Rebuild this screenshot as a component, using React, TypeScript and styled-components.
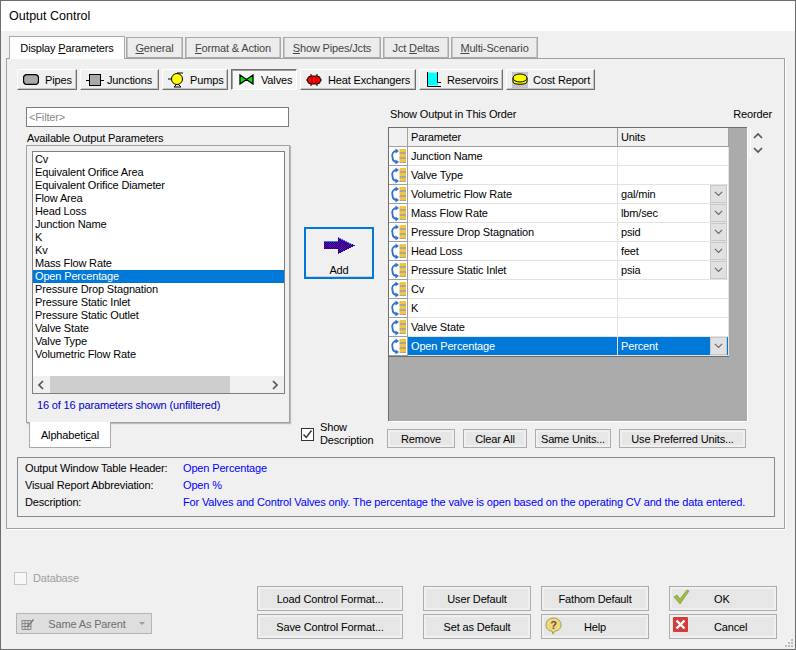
import React from "react";
import styled, { createGlobalStyle } from "styled-components";

const GlobalStyle = createGlobalStyle`
  html, body {
    margin: 0;
    padding: 0;
    background: #f0f0f0;
  }
  * {
    box-sizing: border-box;
  }
  body {
    font-family: "Liberation Sans", Arial, sans-serif;
    font-size: 11px;
    letter-spacing: -0.15px;
    color: #000;
  }
  u {
    text-underline-offset: 1px;
  }
`;

const Dialog = styled.div`
  position: relative;
  width: 796px;
  height: 650px;
  display: flex;
  flex-direction: column;
  background: #f0f0f0;
  border: 1px solid #6d6d6d;
  overflow: hidden;
`;

const TitleBar = styled.div`
  height: 30px;
  flex: none;
  background: #fff;
  padding-left: 8px;
  display: flex;
  align-items: center;
  font-size: 12.5px;
  letter-spacing: 0;
`;

const TabStrip = styled.div`
  display: flex;
  align-items: flex-end;
  height: 27px;
  padding-left: 8px;
  gap: 2px;
`;

const Tab = styled.div<{ $active?: boolean; $width: number }>`
  width: ${(p) => p.$width}px;
  height: ${(p) => (p.$active ? 23 : 21)}px;
  margin-bottom: ${(p) => (p.$active ? -1 : 0)}px;
  margin-right: ${(p) => (p.$active ? -1 : 0)}px;
  position: relative;
  z-index: ${(p) => (p.$active ? 2 : 1)};
  display: flex;
  align-items: center;
  justify-content: center;
  white-space: nowrap;
  background: ${(p) => (p.$active ? "#fff" : "#ececec")};
  border: 1px solid #a9a9a9;
  border-bottom: ${(p) => (p.$active ? "none" : "1px solid #a9a9a9")};
  box-shadow: ${(p) => (p.$active ? "none" : "inset 1px 0 0 #c8c8c8, inset -1px 0 0 #c8c8c8")};
  color: ${(p) => (p.$active ? "#000" : "#444")};
`;

const TabPanel = styled.div`
  width: 779px;
  height: 471px;
  margin-left: 5px;
  background: #f0f0f0;
  border: 1px solid #a0a0a0;
  padding: 10px 0 0 10px;
  position: relative;
  box-shadow: 1px 1px 0 #fff;
`;

const Toolbar = styled.div`
  display: flex;
  gap: 3px;
`;

const ToolButton = styled.div<{ $width: number; $active?: boolean; $pad: number; $gap: number }>`
  width: ${(p) => p.$width}px;
  height: 21px;
  display: flex;
  align-items: center;
  gap: ${(p) => p.$gap}px;
  padding-left: ${(p) => p.$pad}px;
  white-space: nowrap;
  background: ${(p) => (p.$active ? "#f7f7f7" : "#f0f0f0")};
  border: 1px solid;
  border-color: ${(p) =>
    p.$active
      ? "#6f6f6f #fff #fff #6f6f6f"
      : "#fff #6f6f6f #6f6f6f #fff"};
  box-shadow: ${(p) =>
    p.$active
      ? "inset 1px 1px 0 #a0a0a0"
      : "inset -1px -1px 0 #c4c4c4"};

  & > svg {
    flex: none;
  }
`;

const Columns = styled.div`
  display: flex;
  margin: 17px 0 0 9px;
  height: 341px;
`;

const LeftColumn = styled.div`
  width: 264px;
  flex: none;
  display: flex;
  flex-direction: column;
`;

const FilterInput = styled.div`
  width: 263px;
  height: 20px;
  background: #fff;
  border: 1px solid #7a7a7a;
  color: #8a8a8a;
  padding-left: 2px;
  display: flex;
  align-items: center;
`;

const GroupLabel = styled.div`
  margin: 4px 0 0 1px;
  height: 14px;
  line-height: 14px;
`;

const ListGroup = styled.div`
  height: 278px;
  border: 1px solid #a0a0a0;
  box-shadow: 1px 1px 1px #bdbdbd;
  padding: 5px 4px 0 5px;
  display: flex;
  flex-direction: column;
`;

const ListBox = styled.div`
  height: 243px;
  border: 1px solid #7f7f7f;
  background: #fff;
  padding-top: 1px;
  display: flex;
  flex-direction: column;
  justify-content: space-between;
`;

const ListRows = styled.div`
  display: flex;
  flex-direction: column;
`;

const ListRow = styled.div<{ $selected?: boolean }>`
  height: 13px;
  line-height: 13px;
  padding-left: 2px;
  background: ${(p) => (p.$selected ? "#0078d7" : "transparent")};
  color: ${(p) => (p.$selected ? "#fff" : "#000")};
  white-space: nowrap;
`;

const ScrollBar = styled.div`
  height: 17px;
  display: flex;
  align-items: center;
  background: #f0f0f0;
  flex: none;
`;

const ScrollArrow = styled.div`
  width: 17px;
  height: 17px;
  display: flex;
  align-items: center;
  justify-content: center;
  flex: none;
`;

const ScrollTrack = styled.div`
  flex: 1;
  height: 17px;
`;

const ScrollThumb = styled.div`
  width: 180px;
  height: 17px;
  background: #cdcdcd;
`;

const ShownCount = styled.div`
  color: #0000c8;
  margin: 4px 0 0 5px;
  line-height: 14px;
`;

const SideTab = styled.div`
  position: relative;
  width: 82px;
  height: 26px;
  margin: -1px 0 0 3px;
  background: #fff;
  border: 1px solid #a9a9a9;
  border-top: none;
  display: flex;
  align-items: center;
  justify-content: center;
`;

const MiddleColumn = styled.div`
  width: 98px;
  flex: none;
  display: flex;
  flex-direction: column;
  padding-top: 120px;
`;

const AddButton = styled.div`
  width: 70px;
  height: 52px;
  margin-left: 14px;
  border: 2px solid #0078d7;
  background: #f0f0f0;
  display: flex;
  flex-direction: column;
  align-items: center;
  padding-top: 8px;
  gap: 9px;
  line-height: 14px;
  box-shadow: inset 0 -1px 0 #d0d0d0;
`;

const ShowDescription = styled.div`
  margin: auto 0 0 11px;
  display: flex;
  gap: 6px;
  line-height: 13px;
  height: 27px;
`;

const CheckBox = styled.div<{ $disabled?: boolean }>`
  width: 13px;
  height: 13px;
  flex: none;
  background: ${(p) => (p.$disabled ? "#f7f7f7" : "#fff")};
  border: 1px solid ${(p) => (p.$disabled ? "#c6c6c6" : "#333")};
  display: flex;
  align-items: center;
  justify-content: center;
  margin-top: 7px;
`;

const DatabaseCheck = styled(CheckBox)`
  margin-top: 1px;
`;

const RightColumn = styled.div`
  width: 390px;
  flex: none;
  display: flex;
  flex-direction: column;
`;

const RightHeading = styled.div`
  height: 20px;
  display: flex;
  justify-content: space-between;
  padding: 0 6px 0 2px;
  line-height: 14px;
`;

const GridRow = styled.div`
  display: flex;
`;

const GridArea = styled.div`
  width: 359px;
  height: 294px;
  background: #ababab;
  border-top: 1px solid #6d6d6d;
  border-left: 1px solid #6d6d6d;
  box-shadow: 1px 1px 0 #fff;
  flex: none;
`;

const GridTable = styled.div`
  width: 340px;
  display: grid;
  grid-template-columns: 19px 210px 111px;
  grid-auto-rows: 19px;
  background: #fff;
  border-bottom: 1px solid #6d6d6d;
  border-right: 1px solid #6d6d6d;
`;

const HeaderCell = styled.div`
  background: #f0f0f0;
  border-right: 1px solid #a0a0a0;
  border-bottom: 1px solid #a0a0a0;
  padding: 0 0 1px 3px;
  display: flex;
  align-items: center;
`;

const HandleCell = styled.div`
  background: #fff;
  border-right: 1px solid #a0a0a0;
  border-bottom: 1px solid #a0a0a0;
  display: flex;
  align-items: center;
  justify-content: center;
`;

const DataCell = styled.div<{ $selected?: boolean }>`
  position: relative;
  padding: 0 0 1px 3px;
  display: flex;
  align-items: center;
  background: ${(p) => (p.$selected ? "#0078d7" : "#fff")};
  color: ${(p) => (p.$selected ? "#fff" : "#000")};
  border-right: 1px solid #e3e3e3;
  border-bottom: 1px solid #e3e3e3;
`;

const CellDrop = styled.div`
  position: absolute;
  right: 1px;
  top: 0;
  width: 17px;
  height: 18px;
  background: #e1e1e1;
  border: 1px solid #c8c8c8;
  display: flex;
  align-items: center;
  justify-content: center;
`;

const ReorderArrows = styled.div`
  margin: 1px 0 0 3px;
  padding-top: 4px;
  height: 30px;
  width: 15px;
  border-left: 1px solid #fff;
  display: flex;
  flex-direction: column;
  align-items: center;
  gap: 4px;
`;

const ActionRow = styled.div`
  display: flex;
  margin-top: 8px;
  margin-left: -1px;
`;

const FlatButton = styled.div<{ $width: number; $gap?: number; $height?: number }>`
  position: relative;
  width: ${(p) => p.$width}px;
  height: ${(p) => p.$height ?? 19}px;
  margin-right: ${(p) => p.$gap ?? 0}px;
  flex: none;
  display: flex;
  align-items: center;
  justify-content: center;
  white-space: nowrap;
  background: #e6e6e6;
  border: 1px solid #adadad;
  box-shadow: inset 0 0 0 2px #f0f0f0;
`;

const ChoiceButton = styled(FlatButton)`
  justify-content: flex-start;
  padding-left: 44px;
`;

const DescriptionBox = styled.div`
  width: 758px;
  height: 60px;
  margin-top: 9px;
  border: 1px solid #7f8c96;
  padding: 1px 7px;
  display: grid;
  grid-template-columns: 158px 1fr;
  grid-auto-rows: 17px;
  align-items: center;
  white-space: nowrap;
`;

const BlueValue = styled.div`
  color: #0000ff;
  white-space: nowrap;
`;

const BottomArea = styled.div`
  flex: 1;
  display: flex;
  position: relative;
`;

const BottomLeft = styled.div`
  width: 256px;
  flex: none;
  display: flex;
  flex-direction: column;
  padding: 42px 0 0 13px;
`;

const DatabaseRow = styled.div`
  display: flex;
  gap: 6px;
  color: #a0a0a0;
  line-height: 15px;
`;

const ParentSelect = styled.div`
  width: 136px;
  height: 21px;
  margin: 27px 0 0 2px;
  background: #dedede;
  border: 1px solid #b4b4b4;
  color: #6f6f6f;
  display: flex;
  align-items: center;
  padding: 0 6px 0 4px;
`;

const SelectText = styled.span`
  flex: 1;
  text-align: center;
`;

const SelectCaret = styled.span`
  width: 0;
  height: 0;
  border-left: 3px solid transparent;
  border-right: 3px solid transparent;
  border-top: 3px solid #9a9a9a;
`;

const ButtonColumn = styled.div<{ $gap: number }>`
  display: flex;
  flex-direction: column;
  gap: 3px;
  padding-top: 57px;
  margin-right: ${(p) => p.$gap}px;
`;

const ButtonIcon = styled.span`
  position: absolute;
  left: 3px;
  top: 2px;
  display: flex;
`;

const Grip = styled.svg`
  position: absolute;
  right: 1px;
  bottom: 1px;
`;

type ChevronProps = {
  dir: "up" | "down" | "left" | "right";
  color?: string;
  size?: number;
  weight?: number;
};

const Chevron = ({ dir, color = "#555", size = 10, weight = 1.7 }: ChevronProps) => {
  const d = {
    up: "M1 6 L5 2 L9 6",
    down: "M1 2 L5 6 L9 2",
    left: "M6 1 L2 5 L6 9",
    right: "M2 1 L6 5 L2 9",
  }[dir];
  return (
    <svg width={size} height={size} viewBox="0 0 10 10">
      <path d={d} fill="none" stroke={color} strokeWidth={weight} />
    </svg>
  );
};

const PipeIcon = () => (
  <svg width="16" height="11" viewBox="0 0 16 11">
    <rect x="0.5" y="0.5" width="15" height="10" rx="3.5" fill="#a9a9a9" stroke="#000" strokeWidth="1.3" />
  </svg>
);

const JunctionIcon = () => (
  <svg width="18" height="12" viewBox="0 0 18 12">
    <path d="M0 6.5 H4 M14 6.5 H18" stroke="#000" />
    <rect x="3.5" y="0.5" width="11" height="11" fill="#a9a9a9" stroke="#000" />
  </svg>
);

const PumpIcon = () => (
  <svg width="18" height="16" viewBox="0 0 18 16">
    <path d="M9 1 H15" stroke="#000" />
    <circle cx="9" cy="7" r="5.5" fill="#ffff00" stroke="#000" />
    <path d="M0 7 H3.5 M9 12 L6 15 H13 L10 12" fill="none" stroke="#000" />
  </svg>
);

const ValveIcon = () => (
  <svg width="15" height="11" viewBox="0 0 15 11">
    <path d="M1 1 L7.5 5.5 L1 10 Z M14 1 L7.5 5.5 L14 10 Z" fill="#00ee00" stroke="#000" strokeWidth="1.3" />
  </svg>
);

const HeatIcon = () => (
  <svg width="16" height="12" viewBox="0 0 16 12">
    <path d="M0 6 H2 M14 6 H16 M5 0 V2 M11 0 V2 M5 10 V12 M11 10 V12" stroke="#000" />
    <rect x="1.5" y="2" width="13" height="8" rx="3.5" fill="#ff0000" stroke="#000" />
    <path d="M6 2 V10 M10 2 V10" stroke="#900" />
  </svg>
);

const ReservoirIcon = () => (
  <svg width="15" height="15" viewBox="0 0 15 15">
    <rect x="1" y="0.5" width="10" height="13" fill="#00ffff" />
    <path d="M0.5 0 V14.5 H14 M10.5 0 V10.5 H14" fill="none" stroke="#000" />
  </svg>
);

const CostIcon = () => (
  <svg width="16" height="16" viewBox="0 0 16 16">
    <rect width="16" height="16" fill="#c4c4c4" />
    <path d="M1 6 V10 C1 13 15 13 15 10 V6" fill="#ffff00" stroke="#000" />
    <ellipse cx="8" cy="6" rx="7" ry="4" fill="#ffff00" stroke="#000" />
  </svg>
);

const HandleIcon = () => (
  <svg width="17" height="17" viewBox="0 0 17 17">
    <path d="M7 3 C3 3 1.5 6 2.5 9" fill="none" stroke="#2f6fd0" strokeWidth="1.8" />
    <path d="M5.5 0.5 L9 3 L5.5 5.5 Z" fill="#2f6fd0" />
    <path d="M2.5 9 C2.5 12.5 4.5 14 7 14" fill="none" stroke="#2f6fd0" strokeWidth="1.8" />
    <path d="M5.5 11.5 L9 14 L5.5 16.5 Z" fill="#2f6fd0" />
    <rect x="9.5" y="1" width="6.5" height="3" fill="#f5c63c" />
    <rect x="9.5" y="4" width="6.5" height="2" fill="#a8a8a0" />
    <rect x="9.5" y="6" width="6.5" height="3" fill="#f5c63c" />
    <rect x="9.5" y="9" width="6.5" height="2" fill="#a8a8a0" />
    <rect x="9.5" y="11" width="6.5" height="3" fill="#f5c63c" />
    <rect x="9.5" y="14" width="6.5" height="1" fill="#a8a8a0" />
  </svg>
);

const AddArrow = () => (
  <svg width="31" height="17" viewBox="0 0 31 17" shapeRendering="crispEdges">
    <defs>
      <pattern id="dither" width="2" height="2" patternUnits="userSpaceOnUse">
        <rect width="2" height="2" fill="#0000a8" />
        <rect width="1" height="1" fill="#800080" />
        <rect x="1" y="1" width="1" height="1" fill="#800080" />
      </pattern>
    </defs>
    <path d="M0 5 H14 V0 L31 8.5 L14 17 V12 H0 Z" fill="url(#dither)" />
    <path d="M0 4.5 H14 M14 0.5 L28 7.5" stroke="#3a7be0" fill="none" />
  </svg>
);

const CheckMark = () => (
  <svg width="11" height="11" viewBox="0 0 11 11">
    <path d="M1.5 5.5 L4.2 8.5 L9.5 1.5" fill="none" stroke="#333" strokeWidth="1.4" />
  </svg>
);

const OkIcon = () => (
  <svg width="17" height="16" viewBox="0 0 17 16">
    <path d="M1 8 L4 6 L7 10 L14 1 L16 2 L7 15 Z" fill="#9cbe3c" stroke="#6f8f24" strokeWidth="0.6" />
  </svg>
);

const HelpIcon = () => (
  <svg width="17" height="18" viewBox="0 0 17 18">
    <path d="M8.5 1 C13 1 16 4 16 8 C16 12 13 14 10 14 L8 17 L7 14 C3 14 1 11 1 8 C1 4 4 1 8.5 1 Z" fill="#f0d878" stroke="#a89858" />
    <text x="8.5" y="12" fontSize="11" fontWeight="700" textAnchor="middle" fill="#555" fontFamily="Liberation Sans, sans-serif">?</text>
  </svg>
);

const CancelIcon = () => (
  <svg width="15" height="15" viewBox="0 0 15 15">
    <rect width="15" height="15" rx="1" fill="#d63a3a" />
    <path d="M3.5 3.5 L11.5 11.5 M11.5 3.5 L3.5 11.5" stroke="#fff" strokeWidth="2.4" />
  </svg>
);

const SheetIcon = () => (
  <svg width="14" height="14" viewBox="0 0 14 14">
    <path d="M1 3.5 H10 V12.5 H1 Z M1 6.5 H10 M1 9.5 H10 M4 3.5 V12.5 M7 3.5 V12.5" fill="#d8d8d8" stroke="#8a8a8a" />
    <path d="M6 9 L12 2 L13 3 L7 10 Z" fill="#777" />
  </svg>
);

const tools = [
  { label: "Pipes", width: 60, pad: 5, gap: 6, icon: <PipeIcon /> },
  { label: "Junctions", width: 79, pad: 5, gap: 3, icon: <JunctionIcon /> },
  { label: "Pumps", width: 66, pad: 5, gap: 4, icon: <PumpIcon /> },
  { label: "Valves", width: 66, pad: 7, gap: 7, icon: <ValveIcon />, active: true },
  { label: "Heat Exchangers", width: 116, pad: 5, gap: 6, icon: <HeatIcon /> },
  { label: "Reservoirs", width: 84, pad: 7, gap: 5, icon: <ReservoirIcon /> },
  { label: "Cost Report", width: 89, pad: 5, gap: 5, icon: <CostIcon /> },
];

const available = [
  "Cv",
  "Equivalent Orifice Area",
  "Equivalent Orifice Diameter",
  "Flow Area",
  "Head Loss",
  "Junction Name",
  "K",
  "Kv",
  "Mass Flow Rate",
  "Open Percentage",
  "Pressure Drop Stagnation",
  "Pressure Static Inlet",
  "Pressure Static Outlet",
  "Valve State",
  "Valve Type",
  "Volumetric Flow Rate",
];

const outputRows = [
  { name: "Junction Name", units: "" },
  { name: "Valve Type", units: "" },
  { name: "Volumetric Flow Rate", units: "gal/min" },
  { name: "Mass Flow Rate", units: "lbm/sec" },
  { name: "Pressure Drop Stagnation", units: "psid" },
  { name: "Head Loss", units: "feet" },
  { name: "Pressure Static Inlet", units: "psia" },
  { name: "Cv", units: "" },
  { name: "K", units: "" },
  { name: "Valve State", units: "" },
  { name: "Open Percentage", units: "Percent", selected: true },
];

export default function App() {
  return (
    <>
      <GlobalStyle />
      <Dialog>
        <TitleBar>Output Control</TitleBar>
        <TabStrip>
          <Tab $active $width={116}>
            <span>
              Display <u>P</u>arameters
            </span>
          </Tab>
          <Tab $width={57}>
            <span>
              <u>G</u>eneral
            </span>
          </Tab>
          <Tab $width={96}>
            <span>
              <u>F</u>ormat &amp; Action
            </span>
          </Tab>
          <Tab $width={98}>
            <span>
              <u>S</u>how Pipes/Jcts
            </span>
          </Tab>
          <Tab $width={66}>
            <span>
              Jct <u>D</u>eltas
            </span>
          </Tab>
          <Tab $width={87}>
            <span>
              <u>M</u>ulti-Scenario
            </span>
          </Tab>
        </TabStrip>
        <TabPanel>
          <Toolbar>
            {tools.map((t) => (
              <ToolButton key={t.label} $width={t.width} $active={t.active} $pad={t.pad} $gap={t.gap}>
                {t.icon}
                <span>{t.label}</span>
              </ToolButton>
            ))}
          </Toolbar>
          <Columns>
            <LeftColumn>
              <FilterInput>&lt;Filter&gt;</FilterInput>
              <GroupLabel>Available Output Parameters</GroupLabel>
              <ListGroup>
                <ListBox>
                  <ListRows>
                    {available.map((name) => (
                      <ListRow key={name} $selected={name === "Open Percentage"}>
                        {name}
                      </ListRow>
                    ))}
                  </ListRows>
                  <ScrollBar>
                    <ScrollArrow>
                      <Chevron dir="left" />
                    </ScrollArrow>
                    <ScrollTrack>
                      <ScrollThumb />
                    </ScrollTrack>
                    <ScrollArrow>
                      <Chevron dir="right" />
                    </ScrollArrow>
                  </ScrollBar>
                </ListBox>
                <ShownCount>16 of 16 parameters shown (unfiltered)</ShownCount>
              </ListGroup>
              <SideTab>
                <span>
                  Alphabeti<u>c</u>al
                </span>
              </SideTab>
            </LeftColumn>
            <MiddleColumn>
              <AddButton>
                <AddArrow />
                <span>Add</span>
              </AddButton>
              <ShowDescription>
                <CheckBox>
                  <CheckMark />
                </CheckBox>
                <span>
                  Show
                  <br />
                  Description
                </span>
              </ShowDescription>
            </MiddleColumn>
            <RightColumn>
              <RightHeading>
                <span>Show Output in This Order</span>
                <span>Reorder</span>
              </RightHeading>
              <GridRow>
                <GridArea>
                  <GridTable>
                    <HeaderCell />
                    <HeaderCell>Parameter</HeaderCell>
                    <HeaderCell>Units</HeaderCell>
                    {outputRows.map((row) => (
                      <React.Fragment key={row.name}>
                        <HandleCell>
                          <HandleIcon />
                        </HandleCell>
                        <DataCell $selected={row.selected}>{row.name}</DataCell>
                        <DataCell $selected={row.selected}>
                          {row.units}
                          {row.units && (
                            <CellDrop>
                              <Chevron dir="down" color="#666" size={9} weight={1.2} />
                            </CellDrop>
                          )}
                        </DataCell>
                      </React.Fragment>
                    ))}
                  </GridTable>
                </GridArea>
                <ReorderArrows>
                  <Chevron dir="up" />
                  <Chevron dir="down" />
                </ReorderArrows>
              </GridRow>
              <ActionRow>
                <FlatButton $width={68} $gap={8}>Remove</FlatButton>
                <FlatButton $width={64} $gap={8}>Clear All</FlatButton>
                <FlatButton $width={76} $gap={8}>Same Units...</FlatButton>
                <FlatButton $width={127}>Use Preferred Units...</FlatButton>
              </ActionRow>
            </RightColumn>
          </Columns>
          <DescriptionBox>
            <span>Output Window Table Header:</span>
            <BlueValue>Open Percentage</BlueValue>
            <span>Visual Report Abbreviation:</span>
            <BlueValue>Open %</BlueValue>
            <span>Description:</span>
            <BlueValue>
              For Valves and Control Valves only. The percentage the valve is open based on the operating CV and the data entered.
            </BlueValue>
          </DescriptionBox>
        </TabPanel>
        <BottomArea>
          <BottomLeft>
            <DatabaseRow>
              <DatabaseCheck $disabled />
              <span>Database</span>
            </DatabaseRow>
            <ParentSelect>
              <SheetIcon />
              <SelectText>Same As Parent</SelectText>
              <SelectCaret />
            </ParentSelect>
          </BottomLeft>
          <ButtonColumn $gap={20}>
            <FlatButton $width={146} $height={25}>Load Control Format...</FlatButton>
            <FlatButton $width={146} $height={25}>Save Control Format...</FlatButton>
          </ButtonColumn>
          <ButtonColumn $gap={10}>
            <FlatButton $width={108} $height={25}>User Default</FlatButton>
            <FlatButton $width={108} $height={25}>Set as Default</FlatButton>
          </ButtonColumn>
          <ButtonColumn $gap={20}>
            <FlatButton $width={108} $height={25}>Fathom Default</FlatButton>
            <FlatButton $width={108} $height={25}>
              <ButtonIcon>
                <HelpIcon />
              </ButtonIcon>
              Help
            </FlatButton>
          </ButtonColumn>
          <ButtonColumn $gap={0}>
            <ChoiceButton $width={108} $height={25}>
              <ButtonIcon>
                <OkIcon />
              </ButtonIcon>
              OK
            </ChoiceButton>
            <ChoiceButton $width={108} $height={25}>
              <ButtonIcon>
                <CancelIcon />
              </ButtonIcon>
              Cancel
            </ChoiceButton>
          </ButtonColumn>
          <Grip width="10" height="10" viewBox="0 0 10 10">
            <path d="M7 1 h2 v2 h-2 Z M4 4 h2 v2 h-2 Z M7 4 h2 v2 h-2 Z M1 7 h2 v2 h-2 Z M4 7 h2 v2 h-2 Z M7 7 h2 v2 h-2 Z" fill="#bdbdbd" />
          </Grip>
        </BottomArea>
      </Dialog>
    </>
  );
}
